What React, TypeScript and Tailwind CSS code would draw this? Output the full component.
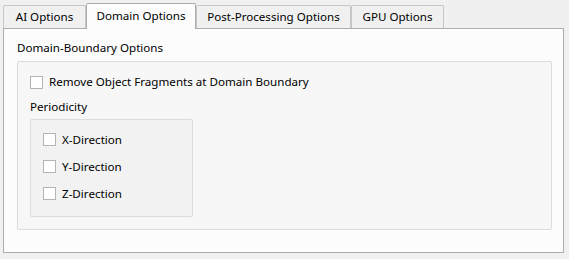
const font = { fontFamily: '"Noto Sans", "Open Sans", sans-serif' };

function Tab({ label, width, selected }: { label: string; width: string; selected?: boolean }) {
  if (selected) {
    return (
      <div
        className={`relative z-10 -mb-px flex h-[26px] items-center justify-center rounded-t-[2px] border border-b-0 border-[#adadad] bg-[#fcfcfc] pb-[2px] ${width}`}
      >
        {label}
      </div>
    );
  }
  return (
    <div
      className={`flex h-[23px] items-center justify-center rounded-t-[2px] border border-b-0 border-[#c6c6c6] bg-[#f0f0f0] ${width}`}
    >
      {label}
    </div>
  );
}

function Check({ label }: { label: string }) {
  return (
    <div className="flex h-[13px] items-center">
      <span className="h-[13px] w-[13px] shrink-0 border border-[#b4b4b4] bg-white" />
      <span className="ml-[6px]">{label}</span>
    </div>
  );
}

export default function App() {
  return (
    <div className="h-[259px] w-[569px] bg-[#f0f0f0] text-[11.6px] leading-none text-black" style={font}>
      <div className="flex items-end pl-[3px] pt-[3px]">
        <Tab label="AI Options" width="w-[83px]" />
        <Tab label="Domain Options" width="w-[110px]" selected />
        <Tab label="Post-Processing Options" width="w-[155px]" />
        <Tab label="GPU Options" width="w-[93px]" />
      </div>
      <div className="ml-[3px] h-[225px] w-[561px] border border-[#adadad] bg-[#fcfcfc] pl-[13px] pr-[11px]">
        <div className="pt-[13px]">Domain-Boundary Options</div>
        <div className="mt-[7px] h-[169px] rounded-[2px] border border-[#dcdcdc] bg-[#f7f7f7] pl-[12px] pt-[14px]">
          <Check label="Remove Object Fragments at Domain Boundary" />
          <div className="mt-[12px]">Periodicity</div>
          <div className="mt-[7px] flex h-[98px] w-[163px] flex-col gap-[14px] rounded-[2px] border border-[#dcdcdc] bg-[#f2f2f2] pl-[12px] pt-[13px]">
            <Check label="X-Direction" />
            <Check label="Y-Direction" />
            <Check label="Z-Direction" />
          </div>
        </div>
      </div>
    </div>
  );
}
